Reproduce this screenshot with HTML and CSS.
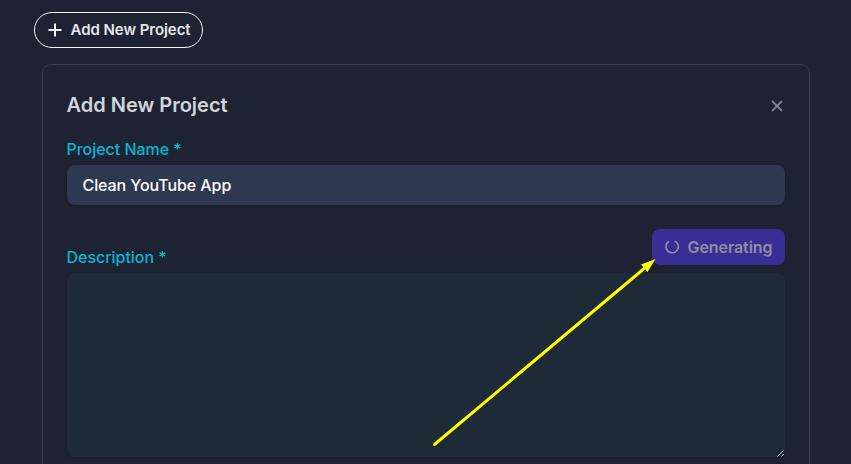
FILE: index.html
```html
<!DOCTYPE html>
<html lang="en">
<head>
<meta charset="utf-8">
<title>Projects</title>
<link rel="stylesheet" href="styles.css">
</head>
<body>
<main class="page">
  <button class="add-button" type="button">
    <svg class="plus" viewBox="0 0 14 14"><path d="M7 .5v13M.5 7h13"/></svg>
    <span>Add New Project</span>
  </button>
  <section class="card">
    <header class="card-header">
      <h2>Add New Project</h2>
      <button class="close" type="button" aria-label="Close">
        <svg viewBox="0 0 12 12"><path d="M1 1l10 10M11 1L1 11"/></svg>
      </button>
    </header>
    <label class="label" for="name">Project Name *</label>
    <input class="input" id="name" type="text" value="Clean YouTube App">
    <div class="description-row">
      <label class="label" for="description">Description *</label>
      <button class="generate" type="button">
        <svg class="spinner" viewBox="0 0 16 16"><path d="M10.6 1.9a6.2 6.2 0 1 1-5.6.4"/></svg>
        <span>Generating</span>
      </button>
    </div>
    <div class="textarea-wrap">
      <textarea class="textarea" id="description"></textarea>
      <svg class="grip" viewBox="0 0 8 8"><path d="M.5 7.5l6-6M4.5 7.5l2.5-2.5"/></svg>
    </div>
  </section>
</main>
<svg class="arrow" viewBox="0 0 851 464"><path class="arrow-line" d="M434.5 444.5L646 267"/><path class="arrow-head" d="M655.5 259L647.5 272L641 264.5Z"/></svg>
</body>
</html>
```
FILE: styles.css
```css
* {
  box-sizing: border-box;
}

body {
  margin: 0;
  height: 464px;
  overflow: hidden;
  background: #1d2332;
  font-family: Inter, sans-serif;
  font-size: 16px;
  line-height: 24px;
}

button {
  margin: 0;
  padding: 0;
  border: 0;
  background: none;
  font: inherit;
}

svg {
  display: block;
  fill: none;
}

.page {
  padding: 12px 41px 0 34px;
}

.add-button {
  display: flex;
  align-items: center;
  gap: 8.5px;
  width: 169px;
  height: 36px;
  padding-left: 13px;
  border: 1px solid #f3f4f6;
  border-radius: 18px;
  color: #e5e7eb;
  font-size: 15px;
  font-weight: 600;
  letter-spacing: -0.05px;
  white-space: nowrap;
}

.plus {
  width: 14px;
  height: 14px;
  stroke: #f3f4f6;
  stroke-width: 2;
}

.card {
  width: 768px;
  height: 400px;
  margin: 16px 0 0 8px;
  padding: 24px 24px 0;
  border: 1px solid #374151;
  border-bottom: 0;
  border-radius: 9px 9px 0 0;
}

.card-header {
  display: flex;
  justify-content: space-between;
  align-items: center;
  height: 32px;
}

h2 {
  margin: 0 0 0 -0.5px;
  color: #d1d5db;
  font-size: 20px;
  font-weight: 600;
  line-height: 32px;
}

.close {
  margin: 2px 2.5px 0 0;
}

.close svg {
  width: 12px;
  height: 12px;
  stroke: #7c8391;
  stroke-width: 1.8;
}

.label {
  display: block;
  margin-left: -0.5px;
  color: #06b6d4;
  font-weight: 500;
  letter-spacing: -0.03px;
}

.card-header + .label {
  margin-top: 16px;
}

.input {
  display: block;
  width: 100%;
  height: 40px;
  margin-top: 4px;
  padding: 0 15.5px;
  border: 0;
  border-radius: 8px;
  outline: 0;
  background: #2e3951;
  color: #fff;
  font: 500 16px/24px Inter, sans-serif;
  letter-spacing: -0.08px;
  box-shadow: 0 1px 3px rgb(0 0 0 / 20%);
}

.description-row {
  display: flex;
  justify-content: space-between;
  align-items: flex-end;
  margin-top: 24px;
  height: 40px;
}

.generate {
  display: flex;
  align-items: center;
  gap: 7.5px;
  align-self: flex-start;
  width: 133px;
  height: 36px;
  padding-left: 12px;
  border-radius: 8px;
  background: #372e96;
  color: #8f8fa0;
  font-weight: 600;
  letter-spacing: -0.08px;
}

.spinner {
  width: 16px;
  height: 16px;
  stroke: #8f8fa0;
  stroke-width: 1.6;
}

.textarea-wrap {
  position: relative;
  margin-top: 4px;
}

.textarea {
  display: block;
  width: 100%;
  height: 184px;
  padding: 8px 16px;
  border: 0;
  border-radius: 8px;
  outline: 0;
  resize: none;
  background: #1f2a39;
  color: #fff;
  font: 500 16px/24px Inter, sans-serif;
  box-shadow: 0 1px 3px rgb(0 0 0 / 15%);
}

.grip {
  position: absolute;
  right: 0;
  bottom: 0;
  width: 8px;
  height: 8px;
  stroke: #c5c8cc;
}

.arrow {
  position: absolute;
  top: 0;
  left: 0;
  width: 851px;
  height: 464px;
  pointer-events: none;
}

.arrow-line {
  stroke: #ff0;
  stroke-width: 3;
  stroke-linecap: round;
}

.arrow-head {
  fill: #ff0;
}
```
